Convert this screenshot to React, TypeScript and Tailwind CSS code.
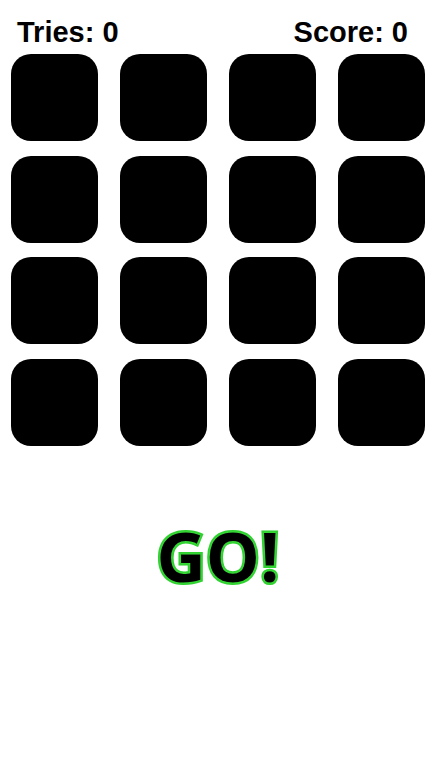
import React from 'react'

const tiles = Array.from({ length: 16 }, (_, i) => i)

export default function App() {
  return (
    <div className="w-[436px] h-[774px] bg-white flex flex-col font-['Liberation_Sans',Arial,sans-serif]">
      <div className="flex justify-between px-[17px] pt-[16px] h-[54px] text-[29px] font-bold leading-[32px] text-black">
        <span>Tries: 0</span>
        <span className="mr-[11px]">Score: 0</span>
      </div>
      <div className="grid grid-cols-4 gap-x-[22px] gap-y-[14.5px] px-[11px]">
        {tiles.map((t) => (
          <button key={t} className="h-[87px] rounded-[20px] bg-black" />
        ))}
      </div>
      <div className="flex justify-center mt-[70px]">
        <span className="font-['Open_Sans',sans-serif] font-bold text-[68px] leading-[80px] text-black [-webkit-text-stroke:5px_#2fd12f] [paint-order:stroke_fill] [text-shadow:0_0_2px_#4ef04e]">
          GO!
        </span>
      </div>
    </div>
  )
}
